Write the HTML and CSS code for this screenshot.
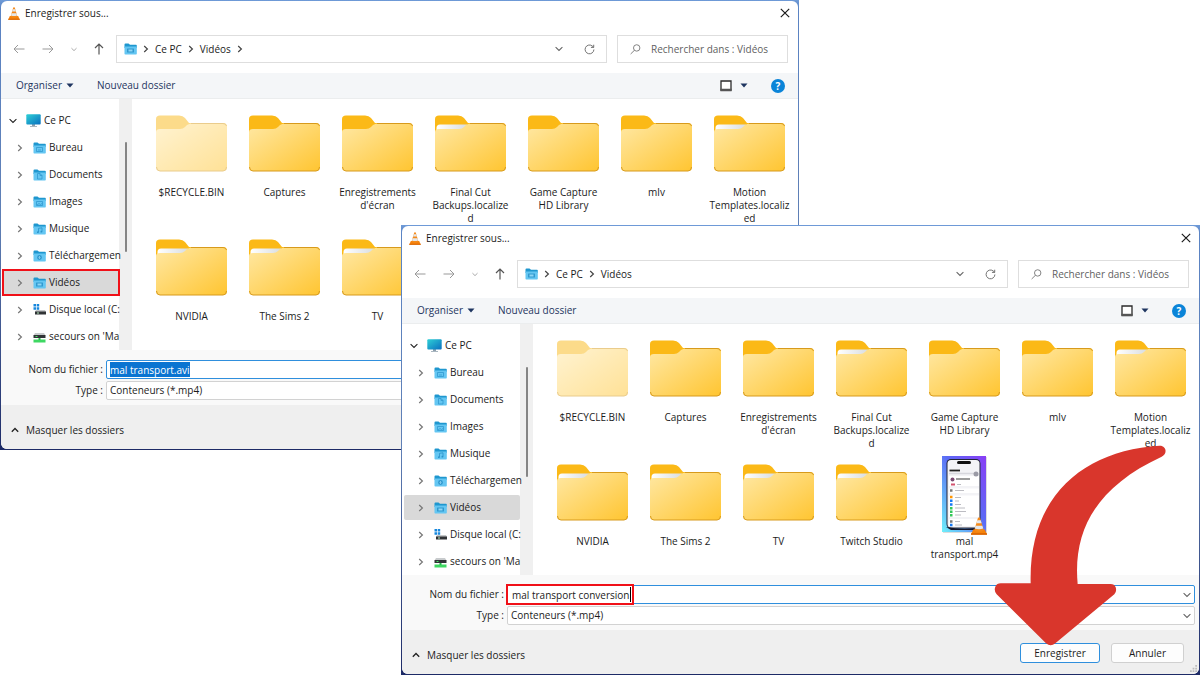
FILE: index.html
```
<!DOCTYPE html>
<html lang="fr">
<head>
<meta charset="utf-8">
<meta name="viewport" content="width=device-width, initial-scale=1">
<title>Enregistrer sous</title>
<link rel="stylesheet" href="styles.css">
</head>
<body>
<svg class="defs" aria-hidden="true">
  <defs>
    <linearGradient id="g-front" x1="0" y1="0" x2="1" y2="1"><stop offset="0" stop-color="#ffe8a4"/><stop offset="1" stop-color="#ffc531"/></linearGradient>
    <linearGradient id="g-pc" x1="0" y1="0" x2="1" y2="1"><stop offset="0" stop-color="#2ed0d6"/><stop offset="1" stop-color="#0a6fc0"/></linearGradient>
    <linearGradient id="g-paper" x1="0" y1="0" x2="1" y2="0"><stop offset="0" stop-color="#fff"/><stop offset="1" stop-color="#d9dde0"/></linearGradient>
    <linearGradient id="g-wall" x1="1" y1="0" x2="0" y2="1"><stop offset="0" stop-color="#8a3df5"/><stop offset=".45" stop-color="#5b6af5"/><stop offset="1" stop-color="#6ff0fa"/></linearGradient>
    <symbol id="folder" viewBox="0 0 71 57">
      <path d="M0 4Q0 .5 4 .5H23Q27 .5 29 3L33 8H67Q71 8 71 12V50H0Z" fill="#fbb917"/>
      <path d="M0 17Q0 14 4 14H24Q27 14 29 12L31 10Q33 8.500 36 8.500H67Q71 8.500 71 12V52Q71 56 67 56H4Q0 56 0 52Z" fill="url(#g-front)"/>
      <path d="M.5 52Q.5 56 4 56H67Q70.500 56 70.500 52M35 8.500H67Q70 8.500 70.500 11" fill="none" stroke="#d79a1c" stroke-width="1"/>
    </symbol>
    <symbol id="folder-full" viewBox="0 0 71 57">
      <path d="M0 4Q0 .5 4 .5H23Q27 .5 29 3L33 8H67Q71 8 71 12V50H0Z" fill="#fbb917"/>
      <path d="M1.500 13Q1.500 9.500 5 9.500H32L29 16H1.500Z" fill="url(#g-paper)"/>
      <path d="M0 17Q0 14 4 14H24Q27 14 29 12L31 10Q33 8.500 36 8.500H67Q71 8.500 71 12V52Q71 56 67 56H4Q0 56 0 52Z" fill="url(#g-front)"/>
      <path d="M.5 52Q.5 56 4 56H67Q70.500 56 70.500 52M35 8.500H67Q70 8.500 70.500 11" fill="none" stroke="#d79a1c" stroke-width="1"/>
    </symbol>
    <symbol id="cone" viewBox="0 0 16 18">
      <path d="M2.200 12.500H13.800L16 17.500H0Z" fill="#f5820b"/><path d="M0 16.200H16V17.800H0Z" fill="#d96400"/>
      <path d="M7 .8Q8 0 9 .8L12.800 13.500Q8 16 3.200 13.500Z" fill="#f58a1a"/>
      <path d="M6.300 3.200H9.700L10.600 6.300H5.400ZM4.600 8.800H11.400L12.200 11.600Q8 13 3.800 11.600Z" fill="#e4e8ec"/>
    </symbol>
    <symbol id="blue-folder" viewBox="0 0 13 12">
      <path d="M.5 1.500Q.5.500 1.500.500H4.500L6 1.800H12Q12.800 1.800 12.800 2.600V5H.5Z" fill="#1f97cf"/>
      <path d="M.5 3.500H12.800V10.800Q12.800 11.600 12 11.600H1.300Q.5 11.600 .5 10.800Z" fill="#64c6f2"/>
    </symbol>
    <symbol id="i-desk" viewBox="0 0 13 12"><use href="#blue-folder"/><path d="M3.500 5.500H9.500V9.500H3.500ZM5 8H8" fill="none" stroke="#3199cf" stroke-width=".8"/></symbol>
    <symbol id="i-doc" viewBox="0 0 13 12"><use href="#blue-folder"/><path d="M4.500 4.500H7L9 6.500V10H4.500ZM7 4.500V6.500H9" fill="none" stroke="#3199cf" stroke-width=".8"/></symbol>
    <symbol id="i-img" viewBox="0 0 13 12"><use href="#blue-folder"/><path d="M3.500 5.500H9.500V9.500H3.500ZM4 9L6 7.500L7.500 8.500L9 7.500" fill="none" stroke="#3199cf" stroke-width=".8"/></symbol>
    <symbol id="i-mus" viewBox="0 0 13 12"><use href="#blue-folder"/><path d="M5.500 9V5.300L9 4.800V8.500" fill="none" stroke="#2a93ca" stroke-width=".8"/><circle cx="4.900" cy="9.200" r=".9" fill="#2a93ca"/><circle cx="8.400" cy="8.700" r=".9" fill="#2a93ca"/></symbol>
    <symbol id="i-down" viewBox="0 0 13 12"><use href="#blue-folder"/><circle cx="6.500" cy="7.500" r="2.400" fill="#3199cf"/><path d="M6.500 6V8.500M5.500 7.500L6.500 8.500L7.500 7.500" fill="none" stroke="#8ed6f5" stroke-width=".8"/></symbol>
    <symbol id="i-vid" viewBox="0 0 13 12"><use href="#blue-folder"/><rect x="3" y="5.500" width="7" height="4" rx=".5" fill="#3199cf"/><path d="M4.500 6.500H8.500V8.500H4.500Z" fill="#8ed6f5"/></symbol>
    <symbol id="i-pc" viewBox="0 0 15 13"><path d="M6 10H9V12H6ZM4 12H11V12.800H4Z" fill="#8fa0ad"/><rect x=".3" y=".3" width="14.400" height="10.200" rx="1" fill="url(#g-pc)"/></symbol>
    <symbol id="i-disk" viewBox="0 0 13 12"><path d="M.5 0H3V2.500H.5ZM3.700 0H6.200V2.500H3.700ZM.5 3.200H3V5.700H.5ZM3.700 3.200H6.200V5.700H3.700Z" fill="#1687dd"/><path d="M3 6H12L13 8H2Z" fill="#c4c7c9"/><path d="M2 7.500H13V10.500H2Z" fill="#303336"/><path d="M4 9H6" stroke="#b6efbf"/></symbol>
    <symbol id="i-net" viewBox="0 0 13 12"><path d="M2 2H11L12.500 4.500H.5Z" fill="#c8cbcd"/><path d="M.5 4H12.500V7H.5Z" fill="#303336"/><path d="M2.500 5.500H4.500" stroke="#46dc63"/><path d="M.5 8.500H12.500V11.500H.5Z" fill="#3ed862"/><path d="M5.500 7H7.500V9H5.500Z" fill="#27b84b"/></symbol>
    <symbol id="c-right" viewBox="0 0 6 8"><path d="M1.200 1L4.400 4L1.200 7" fill="none" stroke="currentColor" stroke-width="1.200"/></symbol>
    <symbol id="c-down" viewBox="0 0 8 6"><path d="M.6 1.200L4 4.500L7.400 1.200" fill="none" stroke="currentColor" stroke-width="1.100"/></symbol>
    <symbol id="c-up" viewBox="0 0 8 6"><path d="M.8 4.800L4 1.500L7.200 4.800" fill="none" stroke="currentColor" stroke-width="1.300"/></symbol>
    <symbol id="tri" viewBox="0 0 8 5"><path d="M.5 .5H7.500L4 4.500Z" fill="currentColor"/></symbol>
    <symbol id="a-left" viewBox="0 0 12 10"><path d="M11.500 5H1M5 1L1 5L5 9" fill="none" stroke="currentColor"/></symbol>
    <symbol id="a-right" viewBox="0 0 12 10"><path d="M.5 5H11M7 1L11 5L7 9" fill="none" stroke="currentColor"/></symbol>
    <symbol id="a-up" viewBox="0 0 10 12"><path d="M5 11.500V1M1 5L5 1L9 5" fill="none" stroke="currentColor" stroke-width="1.200"/></symbol>
    <symbol id="reload" viewBox="0 0 12 12"><path d="M10.800 6A4.800 4.800 0 1 1 8.800 2L10.500 3.600M10.600 .8V3.700H7.600" fill="none" stroke="currentColor"/></symbol>
    <symbol id="glass" viewBox="0 0 12 12"><circle cx="7.300" cy="4.300" r="3.500" fill="none" stroke="currentColor"/><path d="M4.800 6.900L.7 10.900" stroke="currentColor"/></symbol>
    <symbol id="close" viewBox="0 0 10 10"><path d="M.8 .8L9.200 9.200M9.200 .8L.8 9.200" stroke="currentColor" stroke-width="1.200"/></symbol>
    <symbol id="view" viewBox="0 0 12 12"><path d="M1 1H11V10H1Z" fill="#fff" stroke="#2a2a2a" stroke-width="1.300"/><path d="M.4 8.800H11.600V11.300H.4Z" fill="#555"/></symbol>
    <symbol id="grip" viewBox="0 0 8 8"><path d="M6 0H8V2H6ZM3 3H5V5H3ZM6 3H8V5H6ZM0 6H2V8H0ZM3 6H5V8H3ZM6 6H8V8H6Z" fill="#bdbdbd"/></symbol>
  </defs>
</svg>

<main class="desktop">
  <section class="window window-back" aria-label="Enregistrer sous">
    <div class="frame">
      <header class="titlebar"><svg class="cone"><use href="#cone"/></svg><h1>Enregistrer sous...</h1><button class="plain close" aria-label="Fermer"><svg><use href="#close"/></svg></button></header>
      <nav class="navbar">
        <div class="arrows">
          <button class="plain faint" aria-label="Précédent"><svg class="h"><use href="#a-left"/></svg></button>
          <button class="plain faint" aria-label="Suivant"><svg class="h"><use href="#a-right"/></svg></button>
          <button class="plain faint" aria-label="Récents"><svg class="mini"><use href="#c-down"/></svg></button>
          <button class="plain" aria-label="Dossier parent"><svg class="v"><use href="#a-up"/></svg></button>
        </div>
        <div class="address">
          <svg class="place"><use href="#i-vid"/></svg><svg class="sep"><use href="#c-right"/></svg><a href="#">Ce PC</a><svg class="sep"><use href="#c-right"/></svg><a href="#">Vidéos</a><svg class="sep"><use href="#c-right"/></svg>
          <button class="plain drop" aria-label="Adresses précédentes"><svg class="chev"><use href="#c-down"/></svg></button>
          <button class="plain" aria-label="Actualiser"><svg class="reload"><use href="#reload"/></svg></button>
        </div>
        <div class="search"><svg><use href="#glass"/></svg><input type="text" placeholder="Rechercher dans : Vidéos" aria-label="Rechercher dans : Vidéos"></div>
      </nav>
      <div class="toolbar">
        <button class="plain">Organiser <svg class="tri"><use href="#tri"/></svg></button>
        <button class="plain">Nouveau dossier</button>
        <button class="plain view" aria-label="Affichage"><svg class="square"><use href="#view"/></svg><svg class="tri"><use href="#tri"/></svg></button>
        <button class="help" aria-label="Aide">?</button>
      </div>
      <div class="content">
        <ul class="tree">
          <li class="root"><svg class="tw"><use href="#c-down"/></svg><svg class="pc"><use href="#i-pc"/></svg><span>Ce PC</span></li>
          <li><svg class="tw"><use href="#c-right"/></svg><svg class="ic"><use href="#i-desk"/></svg><span>Bureau</span></li>
          <li><svg class="tw"><use href="#c-right"/></svg><svg class="ic"><use href="#i-doc"/></svg><span>Documents</span></li>
          <li><svg class="tw"><use href="#c-right"/></svg><svg class="ic"><use href="#i-img"/></svg><span>Images</span></li>
          <li><svg class="tw"><use href="#c-right"/></svg><svg class="ic"><use href="#i-mus"/></svg><span>Musique</span></li>
          <li><svg class="tw"><use href="#c-right"/></svg><svg class="ic"><use href="#i-down"/></svg><span>Téléchargemen</span></li>
          <li class="selected marked"><svg class="tw"><use href="#c-right"/></svg><svg class="ic"><use href="#i-vid"/></svg><span>Vidéos</span></li>
          <li><svg class="tw"><use href="#c-right"/></svg><svg class="ic"><use href="#i-disk"/></svg><span>Disque local (C:</span></li>
          <li><svg class="tw"><use href="#c-right"/></svg><svg class="ic"><use href="#i-net"/></svg><span>secours on 'Ma</span></li>
        </ul>
        <div class="scrollbar"><div class="thumb"></div></div>
        <ul class="files">
          <li class="hidden-item"><div class="pic"><svg><use href="#folder"/></svg></div>$RECYCLE.BIN</li>
          <li><div class="pic"><svg><use href="#folder"/></svg></div>Captures</li>
          <li><div class="pic"><svg><use href="#folder"/></svg></div>Enregistrements<br>d'écran</li>
          <li><div class="pic"><svg><use href="#folder-full"/></svg></div>Final Cut<br>Backups.localize<br>d</li>
          <li><div class="pic"><svg><use href="#folder"/></svg></div>Game Capture<br>HD Library</li>
          <li><div class="pic"><svg><use href="#folder"/></svg></div>mlv</li>
          <li><div class="pic"><svg><use href="#folder-full"/></svg></div>Motion<br>Templates.localiz<br>ed</li>
          <li><div class="pic"><svg><use href="#folder-full"/></svg></div>NVIDIA</li>
          <li><div class="pic"><svg><use href="#folder-full"/></svg></div>The Sims 2</li>
          <li><div class="pic"><svg><use href="#folder-full"/></svg></div>TV</li>
        </ul>
      </div>
      <div class="fields">
        <label for="name-a">Nom du fichier :</label>
        <div class="box active"><input class="picked" id="name-a" type="text" value="mal transport.avi"></div>
        <label for="type-a">Type :</label>
        <div class="box"><select id="type-a"><option>Conteneurs (*.mp4)</option></select></div>
      </div>
      <footer class="footer"><button class="plain hide"><svg class="chev"><use href="#c-up"/></svg>Masquer les dossiers</button></footer>
    </div>
  </section>

  <section class="window window-front" aria-label="Enregistrer sous">
    <div class="frame">
      <header class="titlebar"><svg class="cone"><use href="#cone"/></svg><h1>Enregistrer sous...</h1><button class="plain close" aria-label="Fermer"><svg><use href="#close"/></svg></button></header>
      <nav class="navbar">
        <div class="arrows">
          <button class="plain faint" aria-label="Précédent"><svg class="h"><use href="#a-left"/></svg></button>
          <button class="plain faint" aria-label="Suivant"><svg class="h"><use href="#a-right"/></svg></button>
          <button class="plain faint" aria-label="Récents"><svg class="mini"><use href="#c-down"/></svg></button>
          <button class="plain" aria-label="Dossier parent"><svg class="v"><use href="#a-up"/></svg></button>
        </div>
        <div class="address">
          <svg class="place"><use href="#i-vid"/></svg><svg class="sep"><use href="#c-right"/></svg><a href="#">Ce PC</a><svg class="sep"><use href="#c-right"/></svg><a href="#">Vidéos</a>
          <button class="plain drop" aria-label="Adresses précédentes"><svg class="chev"><use href="#c-down"/></svg></button>
          <button class="plain" aria-label="Actualiser"><svg class="reload"><use href="#reload"/></svg></button>
        </div>
        <div class="search"><svg><use href="#glass"/></svg><input type="text" placeholder="Rechercher dans : Vidéos" aria-label="Rechercher dans : Vidéos"></div>
      </nav>
      <div class="toolbar">
        <button class="plain">Organiser <svg class="tri"><use href="#tri"/></svg></button>
        <button class="plain">Nouveau dossier</button>
        <button class="plain view" aria-label="Affichage"><svg class="square"><use href="#view"/></svg><svg class="tri"><use href="#tri"/></svg></button>
        <button class="help" aria-label="Aide">?</button>
      </div>
      <div class="content">
        <ul class="tree">
          <li class="root"><svg class="tw"><use href="#c-down"/></svg><svg class="pc"><use href="#i-pc"/></svg><span>Ce PC</span></li>
          <li><svg class="tw"><use href="#c-right"/></svg><svg class="ic"><use href="#i-desk"/></svg><span>Bureau</span></li>
          <li><svg class="tw"><use href="#c-right"/></svg><svg class="ic"><use href="#i-doc"/></svg><span>Documents</span></li>
          <li><svg class="tw"><use href="#c-right"/></svg><svg class="ic"><use href="#i-img"/></svg><span>Images</span></li>
          <li><svg class="tw"><use href="#c-right"/></svg><svg class="ic"><use href="#i-mus"/></svg><span>Musique</span></li>
          <li><svg class="tw"><use href="#c-right"/></svg><svg class="ic"><use href="#i-down"/></svg><span>Téléchargemen</span></li>
          <li class="selected"><svg class="tw"><use href="#c-right"/></svg><svg class="ic"><use href="#i-vid"/></svg><span>Vidéos</span></li>
          <li><svg class="tw"><use href="#c-right"/></svg><svg class="ic"><use href="#i-disk"/></svg><span>Disque local (C:</span></li>
          <li><svg class="tw"><use href="#c-right"/></svg><svg class="ic"><use href="#i-net"/></svg><span>secours on 'Ma</span></li>
        </ul>
        <div class="scrollbar"><div class="thumb"></div></div>
        <ul class="files">
          <li class="hidden-item"><div class="pic"><svg><use href="#folder"/></svg></div>$RECYCLE.BIN</li>
          <li><div class="pic"><svg><use href="#folder"/></svg></div>Captures</li>
          <li><div class="pic"><svg><use href="#folder"/></svg></div>Enregistrements<br>d'écran</li>
          <li><div class="pic"><svg><use href="#folder-full"/></svg></div>Final Cut<br>Backups.localize<br>d</li>
          <li><div class="pic"><svg><use href="#folder"/></svg></div>Game Capture<br>HD Library</li>
          <li><div class="pic"><svg><use href="#folder"/></svg></div>mlv</li>
          <li><div class="pic"><svg><use href="#folder-full"/></svg></div>Motion<br>Templates.localiz<br>ed</li>
          <li><div class="pic"><svg><use href="#folder-full"/></svg></div>NVIDIA</li>
          <li><div class="pic"><svg><use href="#folder-full"/></svg></div>The Sims 2</li>
          <li><div class="pic"><svg><use href="#folder-full"/></svg></div>TV</li>
          <li><div class="pic"><svg><use href="#folder-full"/></svg></div>Twitch Studio</li>
          <li><div class="pic">
            <svg class="video" viewBox="0 0 46 79">
              <path d="M1 1H45V77H1Z" fill="#bbb" opacity=".5"/>
              <path d="M0 0H44V76H0Z" fill="url(#g-wall)"/>
              <rect x="4.500" y="3" width="34" height="69.500" rx="4.500" fill="#222638"/>
              <rect x="5.500" y="4" width="32" height="67.500" rx="3.500" fill="#f3f3f6"/>
              <rect x="15" y="5" width="14" height="3" rx="1.500" fill="#111"/>
              <path d="M7.500 14.500H18" stroke="#222" stroke-width="1.800"/>
              <path d="M7 17.500H33" stroke="#d7d7dd" stroke-width="1.500"/>
              <path d="M7 20H37V30H7ZM7 32.500H37V37H7ZM7 39.500H37V61H7ZM7 63H37V70H7Z" fill="#fff"/>
              <circle cx="10.500" cy="23.500" r="2" fill="#7b4a72"/>
              <path d="M14 23H28" stroke="#666" stroke-width="1.300"/><path d="M9 28.500H13" stroke="#d2536f" stroke-width="2"/><path d="M15 28.500H19M13 34.500H22M13 41.500H19M13 45H17M13 48.500H19M13 52H23M13 55.500H24M13 59H19M13 65.500H18M13 69H20" stroke="#bcbcc2"/>
              <path d="M8 34.500H10.500M8 65.500H10.500" stroke="#777" stroke-width="2.500"/><path d="M8 41H10.500" stroke="#ff9500" stroke-width="2.500"/><path d="M8 44.800H10.500M8 48.500H10.500M8 69H10.500" stroke="#1479f5" stroke-width="2.500"/><path d="M8 52.200H10.500M8 55.800H10.500M8 59.300H10.500" stroke="#34c759" stroke-width="2.500"/>
              <circle cx="34" cy="18" r="2.500" fill="#9a9aa5"/>
              <path d="M4 71Q20 74 34 72V74H9Z" fill="#15172a"/>
              <use href="#cone" x="29" y="61" width="16" height="18"/>
            </svg></div>mal<br>transport.mp4</li>
        </ul>
      </div>
      <div class="fields">
        <label for="name-b">Nom du fichier :</label>
        <div class="box active"><div class="callout"><input class="typed" id="name-b" type="text" value="mal transport conversion"></div><svg class="chev"><use href="#c-down"/></svg></div>
        <label for="type-b">Type :</label>
        <div class="box"><select id="type-b"><option>Conteneurs (*.mp4)</option></select><svg class="chev"><use href="#c-down"/></svg></div>
      </div>
      <footer class="footer"><button class="plain hide"><svg class="chev"><use href="#c-up"/></svg>Masquer les dossiers</button><button class="action primary">Enregistrer</button><button class="action">Annuler</button><svg class="grip"><use href="#grip"/></svg></footer>
    </div>
    <svg class="pointer" viewBox="0 0 900 705" aria-hidden="true"><path d="M778 17C800 16 803 42 785 50C590 140 518 270 533 432H632Q643 432 647 442Q651 454 643 463L466 610Q452 622 438 610L290 463Q281 452 286 440Q291 430 302 430H392C385 160 560 30 778 17Z" fill="#d9362c"/></svg>
  </section>
</main>
</body>
</html>
```
FILE: styles.css
```
* { box-sizing: border-box; }

body {
  margin: 0;
  background: #fff;
  color: #1b1b1b;
  font: 10px/13px "Open Sans", "Noto Sans", sans-serif;
}

.defs { position: absolute; width: 0; height: 0; }
svg { flex: none; display: block; }
ul { margin: 0; padding: 0; list-style: none; }
button, input, select { font: inherit; color: inherit; }
a { color: inherit; text-decoration: none; }

.desktop { position: relative; min-height: 100vh; overflow: hidden; }

.window {
  position: absolute;
  width: calc(100% - 401px);
  padding: 1px;
  background: linear-gradient(to bottom, #6f9bd8 0, #5b84c4 8px, #5f7fb5 50%, #1d2a66 100%);
}
.window-back { top: 0; left: 0; }
.window-front { top: 225px; right: 0; }

.frame {
  display: flex;
  flex-direction: column;
  overflow: hidden;
  border-radius: 6px;
  background: #fff;
}

.plain {
  display: flex;
  align-items: center;
  padding: 0;
  border: 0;
  background: none;
  white-space: nowrap;
}

.titlebar {
  display: flex;
  align-items: center;
  gap: 5px;
  height: 24px;
  padding: 0 8px 0 7px;
}
.titlebar h1 { margin: 0; font-size: 10px; font-weight: 400; }
.cone { width: 12px; height: 13px; }
.close { margin-left: auto; }
.close svg { width: 10px; height: 10px; }

.navbar {
  display: flex;
  align-items: center;
  gap: 10px;
  height: 48px;
  padding: 0 10px 0 12px;
}
.arrows { display: flex; align-items: center; gap: 17px; width: 93px; color: #555; }
.faint { color: #999; }
.h { width: 12px; height: 10px; }
.v { width: 10px; height: 12px; }
.mini { width: 6px; height: 5px; }

.address, .search {
  display: flex;
  align-items: center;
  height: 28px;
  border: 1px solid #dedede;
}
.address { flex: 1; gap: 6px; padding: 0 11px 0 7px; }
.place { width: 13px; height: 12px; }
.sep { width: 6px; height: 8px; color: #444; }
.drop { margin: 0 15px 0 auto; }
.chev { width: 8px; height: 6px; color: #666; }
.reload { width: 11px; height: 11px; color: #666; }
.search { width: 171px; gap: 10px; padding: 0 10px 0 12px; }
.search svg { width: 11px; height: 11px; color: #777; }
.search input {
  flex: 1;
  min-width: 0;
  padding: 0;
  border: 0;
  background: none;
  outline: 0;
}
.search input::placeholder { color: #5f5f5f; opacity: 1; }

.toolbar {
  display: flex;
  align-items: center;
  gap: 23px;
  height: 26px;
  padding: 0 13px 0 15px;
  border-bottom: 1px solid #ebedee;
  background: #f4f6f8;
  color: #1e3560;
}
.toolbar .plain { gap: 4px; }
.tri { width: 8px; height: 5px; }
.toolbar .view { gap: 8px; margin-left: auto; }
.square { width: 12px; height: 12px; }
.help {
  width: 14px;
  height: 14px;
  padding: 0;
  border: 0;
  border-radius: 50%;
  background: #0a84d8;
  color: #fff;
  font-weight: 700;
  line-height: 14px;
}

.content { display: flex; }
.tree { flex: none; z-index: 1; width: 118px; padding-top: 8px; }
.tree li {
  display: flex;
  align-items: center;
  height: 27px;
  padding-left: 15px;
  white-space: nowrap;
}
.tree .root { padding-left: 8px; }
.tree span { margin-left: 3px; }
.tw { width: 8px; height: 8px; margin-right: 9px; color: #777; }
.root .tw { color: #222; }
.pc { width: 15px; height: 13px; }
.ic { width: 13px; height: 12px; }
.tree .selected {
  height: 25px;
  margin: 1px 0 1px 2px;
  padding-left: 13px;
  border-radius: 2px;
  background: #d9d9d9;
}
.tree .marked { border-radius: 0; outline: 2px solid #f01018; outline-offset: -1px; }

.scrollbar { display: flex; justify-content: center; width: 13px; background: #f0f0f0; }
.thumb { width: 2px; height: 110px; margin-top: 43px; border-radius: 1px; background: #858585; }

.files {
  flex: 1;
  display: grid;
  grid-template-columns: repeat(auto-fill, 93px);
  grid-auto-rows: 124px;
  align-content: start;
  height: 251px;
  padding: 7px 0 0 13px;
  overflow: hidden;
  text-align: center;
}
.pic { display: flex; justify-content: center; height: 80px; }
.pic svg { width: 71px; height: 57px; margin-top: 9px; }
.pic .video { width: 46px; height: 79px; margin-top: 1px; }
.hidden-item svg { opacity: .5; }

.fields {
  display: grid;
  grid-template-columns: 102px 1fr;
  align-items: center;
  gap: 2px 3px;
  padding: 10px 4px 5px 0;
  background: #f9f9f9;
}
.fields label { text-align: right; }
.box {
  display: flex;
  align-items: center;
  height: 19px;
  padding: 0 3px;
  border: 1px solid #d2d2d2;
  border-radius: 2px;
  background: #fff;
}
.box.active { border-color: #2f8fdd; }
.box input { field-sizing: content; height: 15px; padding: 0; border: 0; outline: 0; }
.box select { flex: 1; appearance: none; padding: 0; border: 0; background: none; outline: 0; }
.box .chev { margin-left: auto; }
.picked { background: #0a74d1; color: #fff; }
.callout {
  display: flex;
  align-items: center;
  height: 21px;
  margin-left: -5px;
  padding: 0 1px 0 4px;
  border: 2px solid #f01018;
  background: #fff;
}
.box .typed { border-right: 1px solid #000; }

.footer {
  display: flex;
  align-items: center;
  gap: 11px;
  position: relative;
  height: 44px;
  padding: 2px 15px 0 10px;
  background: #efefef;
}
.hide { gap: 7px; margin: 4px auto 0 0; }
.hide .chev { color: #222; }
.action {
  width: 73px;
  height: 20px;
  padding: 0;
  border: 1px solid #d0d0d0;
  border-radius: 3px;
  background: #fdfdfd;
}
.primary { width: 80px; border-color: #2f8fdd; }
.grip { position: absolute; right: 2px; bottom: 2px; width: 7px; height: 7px; }

.pointer { position: absolute; right: 0; bottom: 0; width: 300px; height: 235px; }
```
